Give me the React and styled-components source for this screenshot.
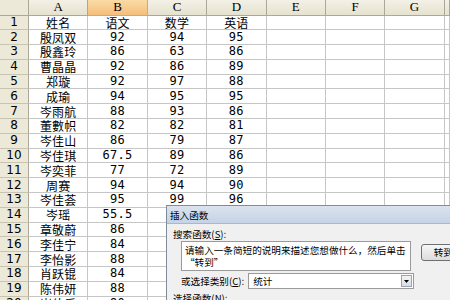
import React from 'react';
import styled, { createGlobalStyle } from 'styled-components';

const GlobalStyle = createGlobalStyle`
  html, body {
    margin: 0;
    padding: 0;
    background: #ffffff;
    overflow: hidden;
  }
`;

const columns = ['A', 'B', 'C', 'D', 'E', 'F', 'G', ''];

const rows = [
  ['姓名', '语文', '数学', '英语'],
  ['殷凤双', '92', '94', '95'],
  ['殷鑫玲', '86', '63', '86'],
  ['曹晶晶', '92', '86', '89'],
  ['郑璇', '92', '97', '88'],
  ['成瑜', '94', '95', '95'],
  ['岑雨航', '88', '93', '86'],
  ['董數帜', '82', '82', '81'],
  ['岑佳山', '86', '79', '87'],
  ['岑佳琪', '67.5', '89', '86'],
  ['岑奕菲', '77', '72', '89'],
  ['周赛', '94', '94', '90'],
  ['岑佳荟', '95', '99', '96'],
  ['岑瑶', '55.5', '', ''],
  ['章敬蔚', '86', '', ''],
  ['李佳宁', '84', '', ''],
  ['李怡影', '88', '', ''],
  ['肖跃锟', '84', '', ''],
  ['陈伟妍', '88', '', ''],
  ['岑佳乐', '90', '', ''],
];

const Screen = styled.div`
  position: relative;
  width: 450px;
  height: 300px;
  overflow: hidden;
  background: #ffffff;
`;

const Sheet = styled.div`
  display: grid;
  grid-template-columns: 29px repeat(7, 59.4px) 1fr;
  grid-template-rows: 15.5px;
  grid-auto-rows: 14.8px;
  font-family: "Noto Sans CJK SC", sans-serif;
  color: #000;
`;

const Corner = styled.div`
  box-sizing: border-box;
  background: #ece9d8;
  border-right: 1px solid #aca899;
  border-bottom: 1px solid #aca899;
`;

const ColHead = styled.div`
  box-sizing: border-box;
  display: flex;
  align-items: center;
  justify-content: center;
  font-family: "Liberation Serif", serif;
  font-size: 13px;
  line-height: 14px;
  background: ${p => (p.$active ? 'linear-gradient(#fbdba6, #f5be7c)' : 'linear-gradient(#f3f1e6, #e6e2d0)')};
  border-right: 1px solid ${p => (p.$active ? '#e0a464' : '#aca899')};
  border-bottom: 1px solid ${p => (p.$active ? '#e0a464' : '#aca899')};
`;

const RowHead = styled.div`
  box-sizing: border-box;
  display: flex;
  align-items: center;
  justify-content: center;
  font-family: "DejaVu Sans", sans-serif;
  font-size: 12px;
  line-height: 13px;
  background: #ece9d8;
  border-right: 1px solid #aca899;
  border-bottom: 1px solid #c8c4b2;
`;

const Cell = styled.div`
  box-sizing: border-box;
  display: flex;
  align-items: center;
  justify-content: center;
  font-size: 12px;
  line-height: 13px;
  font-family: ${p => (p.$num ? '"DejaVu Sans Mono", monospace' : '"Noto Sans CJK SC", sans-serif')};
  letter-spacing: ${p => (p.$num ? '0.3px' : '0.2px')};
  border-right: 1px solid #c6c6c6;
  border-bottom: 1px solid #c6c6c6;
  white-space: nowrap;
`;

const Dialog = styled.div`
  position: absolute;
  left: 166px;
  top: 205px;
  width: 330px;
  height: 130px;
  box-sizing: border-box;
  border: 1px solid #7f8c9c;
  background: #f0f0f0;
  font-family: "Noto Sans CJK SC", sans-serif;
  font-size: 9.6px;
  line-height: 12px;
  color: #000;
`;

const TitleBar = styled.div`
  height: 17px;
  display: flex;
  align-items: center;
  justify-content: space-between;
  padding-left: 3px;
  background: linear-gradient(#dae3ee, #c5d3e5);
  border-bottom: 1px solid #a9b8cb;
`;

const HelpButton = styled.div`
  width: 22px;
  height: 13px;
  margin-right: -9px;
  box-sizing: border-box;
  border: 1px solid #7d8ea5;
  border-radius: 2px;
  background: linear-gradient(#eef3f9, #c9d6e6);
  font-size: 10px;
  line-height: 11px;
  padding-left: 6px;
  color: #1d2b3d;
`;

const DialogBody = styled.div`
  padding: 4px 6px 0;
  display: flex;
  flex-direction: column;
`;

const Label = styled.div`
  line-height: 12px;
  margin-top: ${p => p.$gap || 0}px;
  white-space: nowrap;
`;

const SearchRow = styled.div`
  display: flex;
  align-items: flex-start;
  gap: 10px;
  margin: 1px 0 0 8px;
`;

const TextBox = styled.div`
  width: 237px;
  height: 30px;
  box-sizing: border-box;
  border: 1px solid #9a9a9a;
  background: #fff;
  padding: 2px 3px;
  line-height: 12px;
  white-space: nowrap;
  overflow: hidden;
`;

const GoButton = styled.div`
  margin-top: 3px;
  width: 70px;
  height: 17px;
  box-sizing: border-box;
  border: 1px solid #707070;
  border-radius: 3px;
  background: linear-gradient(#f6f6f6, #dcdcdc);
  line-height: 15px;
  padding-left: 12px;
  white-space: nowrap;
`;

const CategoryRow = styled.div`
  display: flex;
  align-items: center;
  margin: 2px 0 0 8px;
  gap: 4px;
`;

const Select = styled.div`
  width: 166px;
  height: 16px;
  box-sizing: border-box;
  border: 1px solid #9a9a9a;
  background: #fff;
  display: flex;
  align-items: center;
  justify-content: space-between;
  padding-left: 4px;
`;

const SelectArrow = styled.div`
  width: 11px;
  height: 12px;
  margin-right: 1px;
  box-sizing: border-box;
  border: 1px solid #9aa4b0;
  background: linear-gradient(#f4f4f4, #d8dde3);
  display: flex;
  align-items: center;
  justify-content: center;
`;

export default function App() {
  return (
    <Screen>
      <GlobalStyle />
      <Sheet>
        <Corner />
        {columns.map((c, i) => (
          <ColHead key={'h' + i} $active={c === 'B'}>{c}</ColHead>
        ))}
        {rows.map((r, ri) => (
          <React.Fragment key={ri}>
            <RowHead>{ri + 1}</RowHead>
            <Cell>{r[0]}</Cell>
            {[1, 2, 3].map(ci => (
              <Cell key={ci} $num={ri > 0}>{r[ci]}</Cell>
            ))}
            <Cell />
            <Cell />
            <Cell />
            <Cell />
          </React.Fragment>
        ))}
      </Sheet>

      <Dialog>
        <TitleBar>
          <span>插入函数</span>
          <HelpButton>?</HelpButton>
        </TitleBar>
        <DialogBody>
          <Label>搜索函数(<u>S</u>):</Label>
          <SearchRow>
            <TextBox>
              请输入一条简短的说明来描述您想做什么，然后单击
              <br />
              “转到”
            </TextBox>
            <GoButton>转到(<u>G</u>)</GoButton>
          </SearchRow>
          <CategoryRow>
            <Label>或选择类别(<u>C</u>):</Label>
            <Select>
              <span>统计</span>
              <SelectArrow>
                <svg width="5" height="3" viewBox="0 0 5 3">
                  <path d="M0 0 H5 L2.5 3 Z" fill="#000" />
                </svg>
              </SelectArrow>
            </Select>
          </CategoryRow>
          <Label $gap={3}>选择函数(<u>N</u>):</Label>
        </DialogBody>
      </Dialog>
    </Screen>
  );
}
